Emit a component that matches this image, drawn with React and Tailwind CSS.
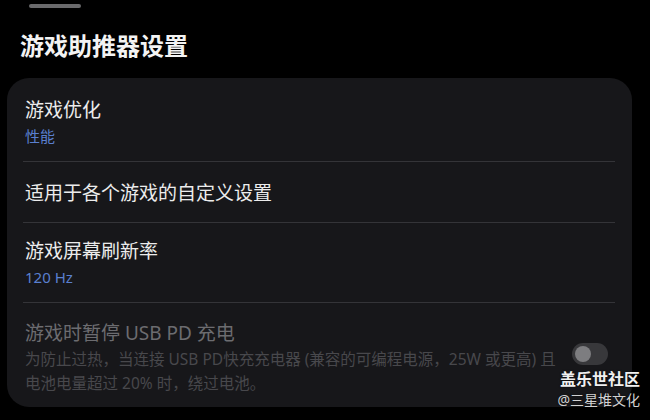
const font = { fontFamily: '"Noto Sans", "Noto Sans CJK SC", sans-serif' };

const Divider = () => <div className="ml-[16px] mr-[17px] h-px bg-[#343438]" />;

const Toggle = () => (
  <div className="flex h-[22px] w-[36px] items-center rounded-full bg-[#38383b] px-[3px]">
    <div className="h-[16px] w-[16px] rounded-full bg-[#7d7d80]" />
  </div>
);

export default function App() {
  return (
    <div
      className="relative h-[420px] w-[650px] overflow-hidden bg-black"
      style={font}
    >
      <div className="ml-[29px] pt-[4px]">
        <div className="h-[4px] w-[52px] rounded-full bg-[#6a6a6c]" />
      </div>

      <h1 className="ml-[20px] mt-[24px] text-[24px] font-bold leading-[28px] text-[#f3f3f3]">
        游戏助推器设置
      </h1>

      <div className="mx-[7px] mt-[18px] h-[329px] w-[625px] rounded-[22px] bg-[#17171a]">
        <div className="h-[83px] pl-[18px] pt-[18px]">
          <div className="text-[19px] leading-[28px] text-[#ececec]">游戏优化</div>
          <div className="text-[15px] leading-[24px] text-[#5a7fcf]">性能</div>
        </div>
        <Divider />
        <div className="h-[60px] pl-[18px] pt-[17px]">
          <div className="text-[19px] leading-[28px] text-[#ececec]">
            适用于各个游戏的自定义设置
          </div>
        </div>
        <Divider />
        <div className="h-[79px] pl-[18px] pt-[14px]">
          <div className="text-[19px] leading-[28px] text-[#ececec]">游戏屏幕刷新率</div>
          <div className="text-[15px] leading-[24px] text-[#5a7fcf]">120 Hz</div>
        </div>
        <Divider />
        <div className="flex h-[104px] items-start justify-between pl-[18px] pr-[24px] pt-[16px]">
          <div>
            <div className="text-[19px] leading-[28px] text-[#6c6c70]">
              游戏时暂停 USB PD 充电
            </div>
            <div className="whitespace-nowrap text-[15.5px] leading-[24px] text-[#48484c]">
              <div>为防止过热，当连接 USB PD快充充电器 (兼容的可编程电源，25W 或更高) 且</div>
              <div>电池电量超过 20% 时，绕过电池。</div>
            </div>
          </div>
          <div className="mt-[24px]">
            <Toggle />
          </div>
        </div>
      </div>

      <div className="absolute right-[10px] top-[368px] flex flex-col items-end">
        <div className="text-[16px] font-bold leading-[22px] text-[#f0f0f0] [text-shadow:0_0_2px_rgba(0,0,0,0.6)]">
          盖乐世社区
        </div>
        <div className="text-[14px] leading-[20px] text-[#d2d2d2] [text-shadow:0_0_2px_rgba(0,0,0,0.6)]">
          @三星堆文化
        </div>
      </div>
    </div>
  );
}
